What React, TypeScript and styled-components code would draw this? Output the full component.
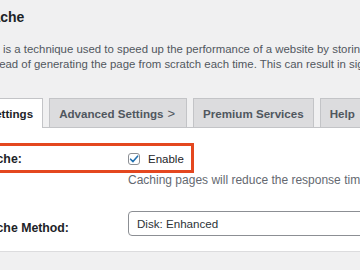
import styled, { createGlobalStyle, css } from 'styled-components';

const GlobalStyle = createGlobalStyle`
  html, body {
    margin: 0;
    padding: 0;
    background: #f0f0f1;
    overflow: hidden;
  }
  body {
    font-family: "Liberation Sans", Arial, sans-serif;
    color: #1d2327;
  }
`;

interface TabProps {
  active?: boolean;
}

const App = () => {
  return (
    <>
      <GlobalStyle />
      <Page>
        <Heading>Page Cache</Heading>
        <Intro>
          Caching is a technique used to speed up the performance of a website by storing
          <br />
          files instead of generating the page from scratch each time. This can result in significant gains.
        </Intro>

        <TabNav>
          <Tab active>General Settings</Tab>
          <Tab>
            Advanced Settings<Chevron>&gt;</Chevron>
          </Tab>
          <Tab>Premium Services</Tab>
          <Tab>Help</Tab>
        </TabNav>

        <Panel>
          <Row>
            <Highlight />
            <Label>Page Cache:</Label>
            <Control>
              <CheckLine>
                <CheckBox>
                  <svg width="10" height="10" viewBox="0 0 10 10">
                    <path d="M1.6 5.2 L4 7.6 L8.6 2.2" fill="none" stroke="#2271b1" strokeWidth="1.6" strokeLinecap="round" strokeLinejoin="round" />
                  </svg>
                </CheckBox>
                Enable
              </CheckLine>
              <Hint>Caching pages will reduce the response time of your site.</Hint>
            </Control>
          </Row>

          <Row>
            <Label>Page Cache Method:</Label>
            <Control>
              <Select>Disk: Enhanced</Select>
            </Control>
          </Row>
        </Panel>
      </Page>
    </>
  );
};

export default App;

// Styles
const Page = styled.div`
  margin-left: -52px;
  width: 520px;
  padding-top: 8px;
`;

const Heading = styled.h2`
  margin: 0 0 0 -3px;
  font-size: 14px;
  font-weight: 700;
  line-height: 19px;
`;

const Intro = styled.p`
  margin: 15px 0 0;
  padding-left: 10px;
  font-size: 11.4px;
  line-height: 15px;
  color: #50575e;
  white-space: nowrap;
`;

const TabNav = styled.div`
  display: flex;
  align-items: flex-end;
  gap: 6px;
  margin-top: 26px;
  margin-left: -17px;
  border-bottom: 1px solid #c3c4c7;
`;

const Tab = styled.div<TabProps>`
  height: 28px;
  padding: 0 9px;
  display: flex;
  align-items: center;
  font-size: 11.6px;
  font-weight: 700;
  color: #50575e;
  background: #dcdcde;
  border: 1px solid #c3c4c7;
  border-bottom: none;
  white-space: nowrap;
  ${(props) =>
    props.active &&
    css`
      background: #fff;
      color: #1d2327;
      margin-bottom: -1px;
      height: 29px;
    `};
`;

const Chevron = styled.span`
  margin: 0 2px 0 4px;
  font-weight: 400;
  font-size: 13px;
`;

const Panel = styled.div`
  background: #fff;
  padding: 14px 0 15px;
  border-bottom: 1px solid #dcdcde;
`;

const Row = styled.div`
  position: relative;
  display: grid;
  grid-template-columns: 180px 1fr;
  align-items: start;
  & + & {
    margin-top: 24px;
  }
`;

const Highlight = styled.div`
  position: absolute;
  left: -10px;
  top: 1px;
  width: 256px;
  height: 30px;
  box-sizing: border-box;
  border: 3px solid #e4471f;
  pointer-events: none;
`;

const Label = styled.div`
  font-size: 12.3px;
  font-weight: 700;
  line-height: 16px;
  padding-top: 9px;
`;

const Control = styled.div`
  display: flex;
  flex-direction: column;
`;

const CheckLine = styled.label`
  display: flex;
  align-items: center;
  gap: 8px;
  font-size: 11.5px;
  line-height: 16px;
  padding-top: 9px;
`;

const CheckBox = styled.span`
  width: 12px;
  height: 12px;
  box-sizing: border-box;
  border: 1px solid #8c8f94;
  border-radius: 3px;
  display: flex;
  align-items: center;
  justify-content: center;
`;

const Hint = styled.div`
  margin-top: 6px;
  font-size: 12px;
  line-height: 14px;
  color: #646970;
  white-space: nowrap;
`;

const Select = styled.div`
  height: 25px;
  box-sizing: border-box;
  border: 1px solid #8c8f94;
  border-radius: 4px;
  padding: 0 8px;
  display: flex;
  align-items: center;
  font-size: 11.6px;
  color: #2c3338;
`;
